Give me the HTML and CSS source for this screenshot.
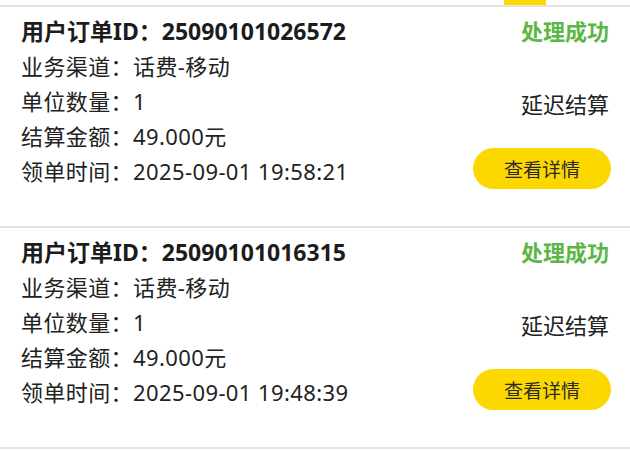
FILE: index.html
```html
<!DOCTYPE html>
<html lang="zh-CN">
<head>
<meta charset="utf-8">
<link rel="stylesheet" href="styles.css">
</head>
<body>
<div class="tabbar"><div class="indicator"></div></div>
<div class="list">
  <div class="card">
    <div class="info">
      <div class="line title">用户订单ID：25090101026572</div>
      <div class="line">业务渠道：话费-移动</div>
      <div class="line">单位数量：1</div>
      <div class="line">结算金额：49.000元</div>
      <div class="line">领单时间：2025-09-01 19:58:21</div>
    </div>
    <div class="side">
      <div class="status">处理成功</div>
      <div class="settle">延迟结算</div>
      <div class="btn">查看详情</div>
    </div>
  </div>
  <div class="card">
    <div class="info">
      <div class="line title">用户订单ID：25090101016315</div>
      <div class="line">业务渠道：话费-移动</div>
      <div class="line">单位数量：1</div>
      <div class="line">结算金额：49.000元</div>
      <div class="line">领单时间：2025-09-01 19:48:39</div>
    </div>
    <div class="side">
      <div class="status">处理成功</div>
      <div class="settle">延迟结算</div>
      <div class="btn">查看详情</div>
    </div>
  </div>
</div>
</body>
</html>
```

FILE: styles.css
```css
html, body {
  margin: 0;
  padding: 0;
  background: #ffffff;
}
body {
  font-family: "Noto Sans", "Noto Sans CJK SC", sans-serif;
  color: #222222;
  width: 630px;
  overflow: hidden;
}
.tabbar {
  height: 5px;
  display: flex;
  justify-content: flex-end;
  padding-right: 84px;
}
.indicator {
  width: 42px;
  height: 5px;
  background: #fcd800;
}
.card {
  display: flex;
  justify-content: space-between;
  border-top: 2px solid #e3e3e3;
  padding: 7px 21px 37px 21px;
}
.info {
  display: flex;
  flex-direction: column;
}
.line {
  font-size: 22px;
  line-height: 35px;
  height: 35px;
  letter-spacing: 0.4px;
  white-space: nowrap;
}
.title {
  font-weight: 700;
  font-size: 23px;
  letter-spacing: 0;
  color: #1c1c1c;
}
.side {
  display: flex;
  flex-direction: column;
  align-items: flex-end;
}
.status {
  font-size: 22px;
  line-height: 35px;
  font-weight: 700;
  color: #5cb645;
}
.settle {
  font-size: 22px;
  line-height: 35px;
  margin-top: 38px;
}
.btn {
  margin-top: 26px;
  margin-right: -2px;
  width: 138px;
  height: 41px;
  border-radius: 21px;
  background: #fcd800;
  display: flex;
  align-items: center;
  justify-content: center;
  font-size: 19px;
  color: #2a2a2a;
}
.list {
  border-bottom: 2px solid #e3e3e3;
}
```
